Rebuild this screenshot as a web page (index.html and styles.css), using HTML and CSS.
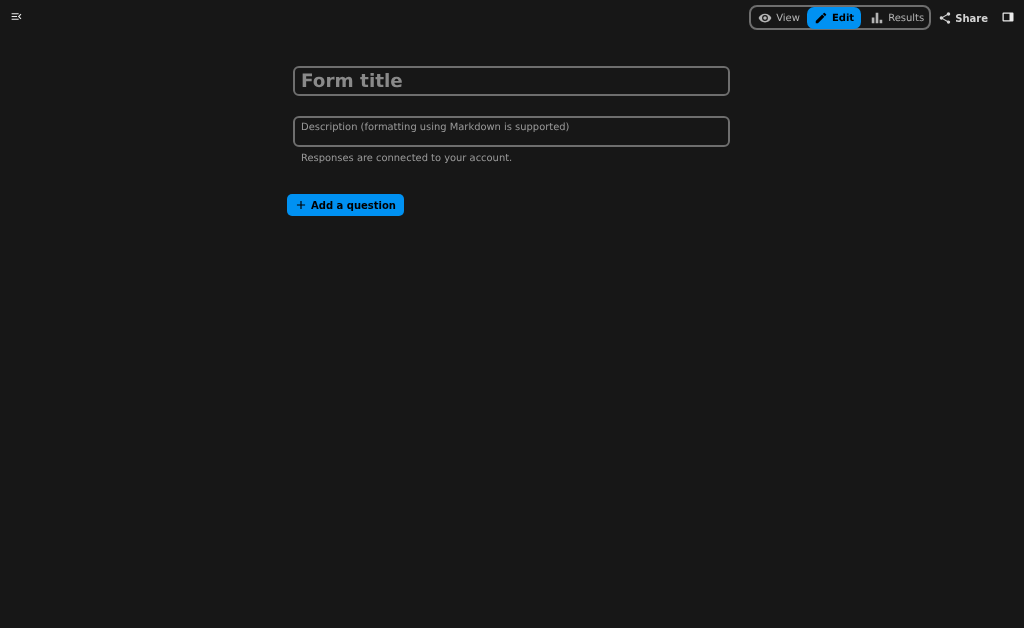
FILE: index.html
```html
<!DOCTYPE html>
<html lang="en">
<head>
<meta charset="utf-8">
<title>Form</title>
<link rel="stylesheet" href="styles.css">
</head>
<body>
<header class="topbar">
  <button class="icon-btn menu" aria-label="Close navigation">
    <svg viewBox="0 0 24 24" class="ic-menu"><path d="M3 6h13v2H3zM3 11h10v2H3zM3 16h13v2H3zM21 8.4 17.4 12l3.6 3.6-1.4 1.4-5-5 5-5z"/></svg>
  </button>
  <div class="top-actions">
    <nav class="switch">
      <span class="tab view"><svg viewBox="0 0 24 24" class="ic"><path d="M12 9a3 3 0 1 0 0 6 3 3 0 0 0 0-6m0 8a5 5 0 1 1 0-10 5 5 0 0 1 0 10m0-12.500C7 4.500 2.730 7.610 1 12c1.730 4.390 6 7.500 11 7.500s9.270-3.110 11-7.500c-1.730-4.390-6-7.500-11-7.500"/></svg>View</span>
      <span class="tab active"><svg viewBox="0 0 24 24" class="ic"><path d="M20.710 7.040a1 1 0 0 0 0-1.410l-2.340-2.340a1 1 0 0 0-1.410 0l-1.840 1.830 3.750 3.750M3 17.250V21h3.750L17.810 9.930l-3.750-3.750z"/></svg>Edit</span>
      <span class="tab results"><svg viewBox="0 0 24 24" class="ic"><path d="M3 21V11h4.500v10zM9.750 21V3h4.500v18zM16.500 21v-6H21v6z"/></svg>Results</span>
    </nav>
    <button class="share"><svg viewBox="0 0 24 24" class="ic"><path d="M18 16.080c-.76 0-1.440.3-1.960.77L8.910 12.700c.05-.23.090-.46.090-.7s-.04-.47-.09-.7l7.050-4.110c.54.5 1.250.81 2.040.81a3 3 0 1 0-3-3c0 .24.040.47.090.7L8.040 9.810A3 3 0 1 0 6 15c.79 0 1.500-.31 2.040-.81l7.120 4.160c-.05.21-.08.43-.08.65a2.920 2.920 0 1 0 2.920-2.920"/></svg>Share</button>
    <button class="icon-btn panel" aria-label="Toggle sidebar">
      <svg viewBox="0 0 24 24" class="ic-panel"><path fill-rule="evenodd" d="M3 3h18a2 2 0 0 1 2 2v14a2 2 0 0 1-2 2H3a2 2 0 0 1-2-2V5a2 2 0 0 1 2-2M3.500 5.500v13H15v-13z"/></svg>
    </button>
  </div>
</header>
<main class="form">
  <div class="field title-field">Form title</div>
  <div class="field desc-field">Description (formatting using Markdown is supported)</div>
  <p class="note">Responses are connected to your account.</p>
  <button class="add"><svg viewBox="0 0 24 24" class="ic-plus"><path d="M19 13h-6v6h-2v-6H5v-2h6V5h2v6h6z"/></svg>Add a question</button>
</main>
</body>
</html>
```

FILE: styles.css
```css
* { box-sizing: border-box; }
html, body { margin: 0; height: 100%; }
body {
  background: #171717;
  color: #ebebeb;
  font-family: "DejaVu Sans", sans-serif;
  font-size: 10px;
  text-rendering: geometricPrecision;
  overflow: hidden;
}
button { font: inherit; color: inherit; background: none; border: 0; padding: 0; }
.topbar {
  display: flex;
  justify-content: space-between;
  align-items: flex-start;
  padding: 5px 6px 0 6px;
  height: 30px;
  will-change: transform;
}
.icon-btn { display: flex; align-items: center; justify-content: center; }
.menu { width: 20px; height: 22px; }
.ic-menu { width: 13px; height: 13px; fill: #ebebeb; }
.top-actions { display: flex; align-items: center; }
.switch {
  display: flex;
  align-items: center;
  width: 182px;
  height: 25px;
  border: 2px solid #6e6e6e;
  border-radius: 8px;
}
.tab {
  display: flex;
  flex: none;
  align-items: center;
  gap: 4px;
  height: 22px;
  padding: 2px 7px 0;
  color: #b4b4b4;
  border-radius: 7px;
}
.tab.results { padding: 2px 4px 0 9px; }
.tab.active { background: #0091f2; color: #000; font-weight: 700; }
.ic { width: 14px; height: 14px; margin-bottom: 2px; fill: currentColor; flex: none; }
.share {
  display: flex;
  align-items: center;
  gap: 3px;
  margin-left: 7px;
  height: 25px;
  padding-top: 2px;
  font-weight: 700;
  color: #d4d4d4;
}
.panel { width: 20px; height: 22px; margin: 0 0 2px 10px; }
.ic-panel { width: 12px; height: 12px; fill: #ebebeb; }
.form {
  width: 437px;
  margin: 36px 0 0 293px;
  will-change: transform;
}
.field {
  border: 2px solid #6e6e6e;
  border-radius: 6px;
  height: 31px;
  padding-left: 6px;
  color: #8a8a8a;
}
.title-field {
  height: 30px;
  font-size: 18.4px;
  font-weight: 700;
  line-height: 28px;
}
.desc-field {
  margin-top: 20px;
  font-size: 9.92px;
  line-height: 19px;
  color: #9a9a9a;
}
.note {
  margin: 4px 0 0;
  padding-left: 8px;
  font-size: 9.92px;
  line-height: 16px;
  color: #9a9a9a;
}
.add {
  display: flex;
  align-items: center;
  gap: 3px;
  width: 117px;
  height: 22px;
  margin: 27px 0 0 -6px;
  padding-left: 7px;
  background: #0091f2;
  color: #000;
  border-radius: 5px;
  font-weight: 700;
  font-size: 10px;
  white-space: nowrap;
}
.ic-plus { width: 14px; height: 14px; fill: #000; }
```
